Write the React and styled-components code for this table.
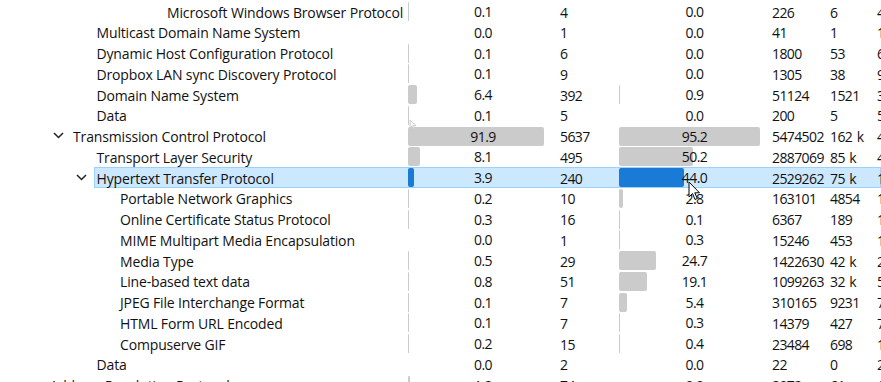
import React from 'react';
import styled, { createGlobalStyle } from 'styled-components';

const INDENT = 23.5;
const NAME_END = 407;
const BAR_SCALE = 1.48;

const GlobalStyle = createGlobalStyle`
  html, body {
    margin: 0;
    padding: 0;
    background: #fff;
  }
  body {
    font-family: "Open Sans", "Noto Sans", sans-serif;
    font-size: 14px;
    color: #111;
  }
`;

const Tree = styled.div`
  position: relative;
  width: 881px;
  height: 382px;
  padding-top: 1px;
  box-sizing: border-box;
  overflow: hidden;
  background: #fff;
`;

const Row = styled.div`
  display: flex;
  height: 20.75px;
`;

const Indent = styled.div`
  flex: none;
  width: ${(p) => 23 + p.$depth * INDENT}px;
`;

const ChevronSlot = styled.div`
  flex: none;
  width: ${INDENT}px;
  display: flex;
  align-items: center;
  justify-content: center;
`;

const Cells = styled.div`
  flex: 1;
  display: grid;
  grid-template-columns: ${(p) => NAME_END - (46.5 + p.$depth * INDENT)}px 152px 59px 153px 58px 47px 1fr;
  align-items: center;
  background: ${(p) => (p.$selected ? '#cce8ff' : 'transparent')};
  box-shadow: ${(p) => (p.$selected ? 'inset 0 0 0 1px #99d1ff' : 'none')};
  white-space: nowrap;
  min-width: 0;
`;

const Name = styled.div`
  padding-left: 3px;
  overflow: hidden;
  letter-spacing: -0.15px;
`;

const Num = styled.div`
  padding-left: 1px;
  overflow: hidden;
  letter-spacing: -0.6px;
  word-spacing: 1.5px;
`;

const PercentCell = styled.div`
  display: grid;
  height: 100%;
  box-sizing: border-box;
  padding: 1px 1px 2px 1px;
  align-items: center;
`;

const Bar = styled.div`
  grid-area: 1 / 1;
  justify-self: start;
  height: 100%;
  border-radius: 2px;
  background: ${(p) => (p.$active ? '#1a7bd6' : '#cbcbcb')};
`;

const PercentText = styled.span`
  grid-area: 1 / 1;
  text-align: center;
  position: relative;
  letter-spacing: -0.5px;
`;

const Pointer = styled.svg`
  position: absolute;
  left: ${(p) => p.$x}px;
  top: ${(p) => p.$y}px;
  pointer-events: none;
`;

const rows = [
  { name: 'Microsoft Windows Browser Protocol', d: 5, pp: 0.1, pk: '4', pb: 0.0, b: '226', bits: '6', n: '4' },
  { name: 'Multicast Domain Name System', d: 2, pp: 0.0, pk: '1', pb: 0.0, b: '41', bits: '1', n: '1' },
  { name: 'Dynamic Host Configuration Protocol', d: 2, pp: 0.1, pk: '6', pb: 0.0, b: '1800', bits: '53', n: '6' },
  { name: 'Dropbox LAN sync Discovery Protocol', d: 2, pp: 0.1, pk: '9', pb: 0.0, b: '1305', bits: '38', n: '9' },
  { name: 'Domain Name System', d: 2, pp: 6.4, pk: '392', pb: 0.9, b: '51124', bits: '1521', n: '3' },
  { name: 'Data', d: 2, pp: 0.1, pk: '5', pb: 0.0, b: '200', bits: '5', n: '5' },
  { name: 'Transmission Control Protocol', d: 1, open: true, pp: 91.9, pk: '5637', pb: 95.2, b: '5474502', bits: '162 k', n: '4' },
  { name: 'Transport Layer Security', d: 2, pp: 8.1, pk: '495', pb: 50.2, b: '2887069', bits: '85 k', n: '4' },
  { name: 'Hypertext Transfer Protocol', d: 2, open: true, selected: true, pp: 3.9, pk: '240', pb: 44.0, b: '2529262', bits: '75 k', n: '1' },
  { name: 'Portable Network Graphics', d: 3, pp: 0.2, pk: '10', pb: 2.8, b: '163101', bits: '4854', n: '1' },
  { name: 'Online Certificate Status Protocol', d: 3, pp: 0.3, pk: '16', pb: 0.1, b: '6367', bits: '189', n: '1' },
  { name: 'MIME Multipart Media Encapsulation', d: 3, pp: 0.0, pk: '1', pb: 0.3, b: '15246', bits: '453', n: '1' },
  { name: 'Media Type', d: 3, pp: 0.5, pk: '29', pb: 24.7, b: '1422630', bits: '42 k', n: '2' },
  { name: 'Line-based text data', d: 3, pp: 0.8, pk: '51', pb: 19.1, b: '1099263', bits: '32 k', n: '5' },
  { name: 'JPEG File Interchange Format', d: 3, pp: 0.1, pk: '7', pb: 5.4, b: '310165', bits: '9231', n: '7' },
  { name: 'HTML Form URL Encoded', d: 3, pp: 0.1, pk: '7', pb: 0.3, b: '14379', bits: '427', n: '7' },
  { name: 'Compuserve GIF', d: 3, pp: 0.2, pk: '15', pb: 0.4, b: '23484', bits: '698', n: '1' },
  { name: 'Data', d: 2, pp: 0.0, pk: '2', pb: 0.0, b: '22', bits: '0', n: '2' },
  { name: 'Address Resolution Protocol', d: 0, pp: 1.2, pk: '74', pb: 0.0, b: '2072', bits: '61', n: '1' },
];

const Chevron = () => (
  <svg width="11" height="7" viewBox="0 0 11 7">
    <polyline points="1,1 5.5,5.5 10,1" fill="none" stroke="#222" strokeWidth="1.5" />
  </svg>
);

const Percent = ({ value, active }) => (
  <PercentCell>
    <Bar $active={active} style={{ width: `${value * BAR_SCALE}px` }} />
    <PercentText>{value.toFixed(1)}</PercentText>
  </PercentCell>
);

const App = () => (
  <>
    <GlobalStyle />
    <Tree>
      {rows.map((r, i) => (
        <Row key={i}>
          <Indent $depth={r.d} />
          <ChevronSlot>{r.open && <Chevron />}</ChevronSlot>
          <Cells $depth={r.d} $selected={r.selected}>
            <Name>{r.name}</Name>
            <Percent value={r.pp} active={r.selected} />
            <Num>{r.pk}</Num>
            <Percent value={r.pb} active={r.selected} />
            <Num>{r.b}</Num>
            <Num>{r.bits}</Num>
            <Num>{r.n}</Num>
          </Cells>
        </Row>
      ))}
      <Pointer $x={409} $y={119} width="8" height="11" viewBox="0 0 8 11">
        <path d="M1 1 L1 9 L3 7 L5 10 L6 9.5 L4.5 6.5 L7 6.5 Z" fill="#f4f4f4" stroke="#c8c8c8" strokeWidth="0.8" />
      </Pointer>
      <Pointer $x={688} $y={181} width="14" height="21" viewBox="0 0 14 21">
        <path d="M1 1 L1 16 L4.5 12.5 L7 18.5 L9.3 17.5 L6.8 11.8 L11.5 11.8 Z" fill="#fff" stroke="#000" strokeWidth="1" strokeLinejoin="round" />
      </Pointer>
    </Tree>
  </>
);

export default App;
